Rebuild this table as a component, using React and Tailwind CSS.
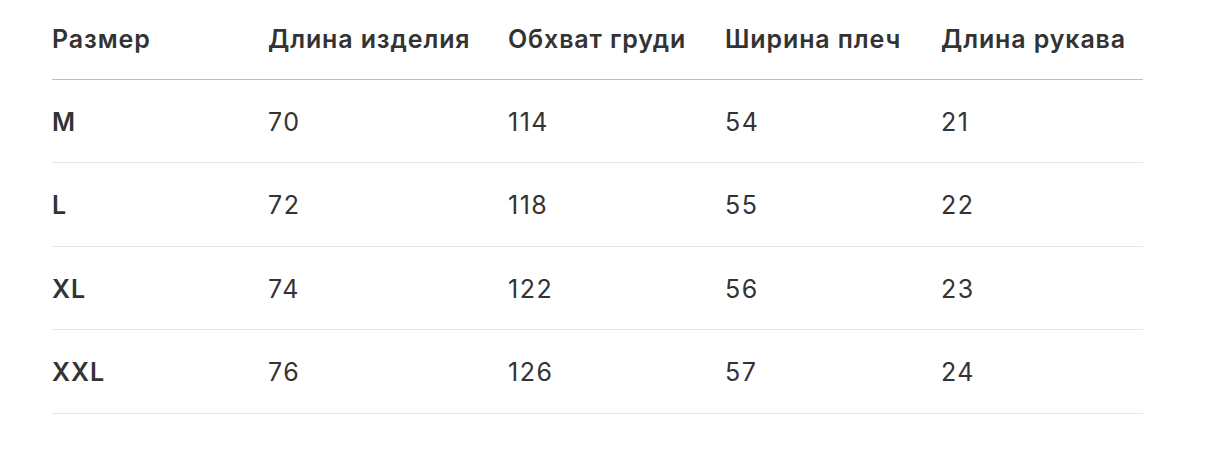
const columns = ['Размер', 'Длина изделия', 'Обхват груди', 'Ширина плеч', 'Длина рукава']

const rows = [
  ['M', 70, 114, 54, 21],
  ['L', 72, 118, 55, 22],
  ['XL', 74, 122, 56, 23],
  ['XXL', 76, 126, 57, 24],
]

const widths = ['w-[216px]', 'w-[240px]', 'w-[217px]', 'w-[216px]', 'w-[202px]']

export default function App() {
  return (
    <div className="min-h-[460px] bg-white px-[52px] text-[#333]" style={{ fontFamily: 'Inter, "Noto Sans", sans-serif' }}>
      <table className="w-[1091px] border-collapse table-fixed">
        <thead>
          <tr className="border-b border-[#bdbdbd]">
            {columns.map((c, i) => (
              <th key={c} className={`${widths[i]} h-[79px] p-0 whitespace-nowrap text-left align-middle text-[25px] font-semibold tracking-[0.035em]`}>
                {c}
              </th>
            ))}
          </tr>
        </thead>
        <tbody>
          {rows.map(r => (
            <tr key={r[0]} className="border-b border-[#e6e6e6]">
              {r.map((v, i) => (
                <td key={i} className={`h-[83.5px] p-0 pt-[3px] align-middle text-[25px] ${i === 0 ? 'font-semibold tracking-[0.04em]' : 'font-normal tracking-[0.06em]'}`}>
                  {v}
                </td>
              ))}
            </tr>
          ))}
        </tbody>
      </table>
    </div>
  )
}
